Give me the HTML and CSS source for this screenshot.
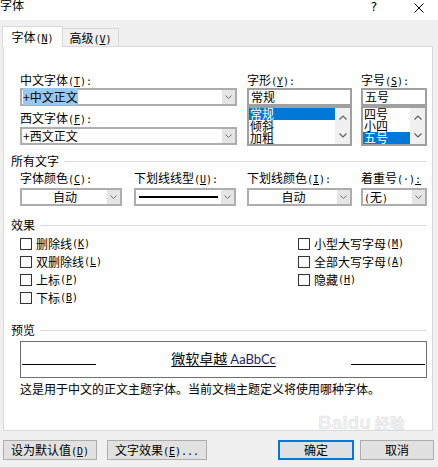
FILE: index.html
```html
<!DOCTYPE html>
<html lang="zh-CN">
<head>
<meta charset="utf-8">
<link rel="stylesheet" href="styles.css">
</head>
<body>
<div class="titlebar">
  <span class="title">字体</span>
  <span class="help">?</span>
  <span class="close"><svg width="10" height="10" viewBox="0 0 10 10"><path d="M0.5 0.5 L9.5 9.5 M9.5 0.5 L0.5 9.5" stroke="#000" stroke-width="1" fill="none"/></svg></span>
</div>

<div class="tabs">
  <div class="tab active">字体<span class="m">(<u>N</u>)</span></div>
  <div class="tab inactive">高级<span class="m">(<u>V</u>)</span></div>
</div>

<div class="panel">
  <div class="fontgrid">
    <div class="col">
      <div class="lbl">中文字体<span class="m">(<u>T</u>):</span></div>
      <div class="combo wide"><div class="val"><span class="seltext">+中文正文</span></div><div class="arr"><svg width="7" height="4" viewBox="0 0 7 4"><path d="M0.5 0.5 L3.5 3.5 L6.5 0.5" stroke="#707070" fill="none"/></svg></div></div>
      <div class="lbl l2">西文字体<span class="m">(<u>F</u>):</span></div>
      <div class="combo wide"><div class="val">+西文正文</div><div class="arr"><svg width="7" height="4" viewBox="0 0 7 4"><path d="M0.5 0.5 L3.5 3.5 L6.5 0.5" stroke="#707070" fill="none"/></svg></div></div>
    </div>
    <div class="col">
      <div class="lbl">字形<span class="m">(<u>Y</u>):</span></div>
      <div class="tbox">常规</div>
      <div class="lbox">
        <div class="items">
          <div class="item on">常规</div>
          <div class="item">倾斜</div>
          <div class="item">加粗</div>
        </div>
        <div class="sb">
          <svg width="8" height="5" viewBox="0 0 8 5"><path d="M0.5 4.5 L4 1 L7.5 4.5" stroke="#606060" stroke-width="1.2" fill="none"/></svg>
          <svg width="8" height="5" viewBox="0 0 8 5"><path d="M0.5 0.5 L4 4 L7.5 0.5" stroke="#606060" stroke-width="1.2" fill="none"/></svg>
        </div>
      </div>
    </div>
    <div class="col">
      <div class="lbl">字号<span class="m">(<u>S</u>):</span></div>
      <div class="tbox">五号</div>
      <div class="lbox">
        <div class="items">
          <div class="item">四号</div>
          <div class="item">小四</div>
          <div class="item on">五号</div>
        </div>
        <div class="sb">
          <svg width="8" height="5" viewBox="0 0 8 5"><path d="M0.5 4.5 L4 1 L7.5 4.5" stroke="#606060" stroke-width="1.2" fill="none"/></svg>
          <svg width="8" height="5" viewBox="0 0 8 5"><path d="M0.5 0.5 L4 4 L7.5 0.5" stroke="#606060" stroke-width="1.2" fill="none"/></svg>
        </div>
      </div>
    </div>
  </div>

  <div class="ghead first"><span>所有文字</span><i></i></div>
  <div class="fields">
    <div class="field">
      <div class="lbl">字体颜色<span class="m">(<u>C</u>):</span></div>
      <div class="combo w102"><div class="val center">自动</div><div class="arr"><svg width="7" height="4" viewBox="0 0 7 4"><path d="M0.5 0.5 L3.5 3.5 L6.5 0.5" stroke="#707070" fill="none"/></svg></div></div>
    </div>
    <div class="field">
      <div class="lbl">下划线线型<span class="m">(<u>U</u>):</span></div>
      <div class="combo w102"><div class="val linev"><div class="uline"></div></div><div class="arr"><svg width="7" height="4" viewBox="0 0 7 4"><path d="M0.5 0.5 L3.5 3.5 L6.5 0.5" stroke="#707070" fill="none"/></svg></div></div>
    </div>
    <div class="field">
      <div class="lbl">下划线颜色<span class="m">(<u>I</u>):</span></div>
      <div class="combo w105"><div class="val center">自动</div><div class="arr"><svg width="7" height="4" viewBox="0 0 7 4"><path d="M0.5 0.5 L3.5 3.5 L6.5 0.5" stroke="#707070" fill="none"/></svg></div></div>
    </div>
    <div class="field">
      <div class="lbl">着重号<span class="m">(·)<u>:</u></span></div>
      <div class="combo w66"><div class="val"><span class="m">(</span>无<span class="m">)</span></div><div class="arr"><svg width="7" height="4" viewBox="0 0 7 4"><path d="M0.5 0.5 L3.5 3.5 L6.5 0.5" stroke="#707070" fill="none"/></svg></div></div>
    </div>
  </div>

  <div class="ghead effects"><span>效果</span><i></i></div>
  <div class="checks">
    <div class="ccol">
      <div class="chk"><span class="box"></span>删除线<span class="m">(<u>K</u>)</span></div>
      <div class="chk"><span class="box"></span>双删除线<span class="m">(<u>L</u>)</span></div>
      <div class="chk"><span class="box"></span>上标<span class="m">(<u>P</u>)</span></div>
      <div class="chk"><span class="box"></span>下标<span class="m">(<u>B</u>)</span></div>
    </div>
    <div class="ccol">
      <div class="chk"><span class="box"></span>小型大写字母<span class="m">(<u>M</u>)</span></div>
      <div class="chk"><span class="box"></span>全部大写字母<span class="m">(<u>A</u>)</span></div>
      <div class="chk"><span class="box"></span>隐藏<span class="m">(<u>H</u>)</span></div>
    </div>
  </div>

  <div class="ghead prev"><span>预览</span><i></i></div>
  <div class="preview">
    <div class="pline"></div>
    <div class="ptext">微软卓越 <span class="latin">AaBbCc</span></div>
    <div class="pline"></div>
  </div>
  <div class="desc">这是用于中文的正文主题字体。当前文档主题定义将使用哪种字体。</div>
</div>

<div class="buttons">
  <div class="btn b1">设为默认值<span class="m">(<u>D</u>)</span></div>
  <div class="btn b2">文字效果<span class="m">(<u>E</u>)...</span></div>
  <div class="btn b3 default">确定</div>
  <div class="btn b4">取消</div>
</div>

<div class="wm"><span class="wm1">Bai</span><span class="wm2">du</span><span class="wm3">经验</span></div>
</body>
</html>
```

FILE: styles.css
```css
body {
  margin: 0;
  width: 438px;
  height: 467px;
  overflow: hidden;
  position: relative;
  background: #f0f0f0;
  color: #000;
  font-family: "Noto Sans CJK SC", "Liberation Sans", sans-serif;
  font-size: 12px;
  line-height: 16px;
}

.m {
  font-family: "DejaVu Sans Mono", "Liberation Mono", monospace;
  font-size: 10px;
}

u {
  text-decoration: underline;
  text-underline-offset: 1px;
}

/* title bar */
.titlebar {
  height: 20px;
  background: #fff;
  display: flex;
  align-items: flex-start;
}
.title {
  line-height: 12px;
  margin-top: -1px;
}
.help {
  margin-left: auto;
  margin-top: 1px;
  width: 10px;
  text-align: center;
  font-family: "DejaVu Sans", sans-serif;
  font-size: 12px;
  line-height: 12px;
}
.close {
  margin-left: 35px;
  margin-right: 14px;
  margin-top: 3px;
  width: 10px;
  height: 10px;
  display: flex;
}

/* tabs */
.tabs {
  display: flex;
  align-items: flex-start;
  margin-top: 6px;
  padding-left: 2px;
  height: 21px;
  margin-bottom: -1px;
  position: relative;
  z-index: 1;
}
.tab {
  box-sizing: border-box;
  border: 1px solid #d9d9d9;
  border-bottom: none;
  text-align: center;
  white-space: nowrap;
}
.tab.active {
  width: 61px;
  height: 21px;
  background: #fff;
  line-height: 20px;
}
.tab.inactive {
  width: 56px;
  height: 18px;
  margin-top: 2px;
  border-left: none;
  background: #f0f0f0;
  line-height: 17px;
}

/* panel */
.panel {
  box-sizing: border-box;
  width: 430px;
  height: 385px;
  margin-left: 3px;
  border: 1px solid #d9d9d9;
  background: #fff;
  padding: 25px 4px 0 7px;
}

.lbl {
  height: 16px;
  line-height: 16px;
  white-space: nowrap;
}
.lbl.l2 {
  height: 21px;
  box-sizing: border-box;
  padding-top: 4px;
}

.fontgrid {
  display: grid;
  grid-template-columns: 227px 114px 66px;
  padding-left: 9px;
}

.combo {
  box-sizing: border-box;
  height: 18px;
  border: 2px solid #adadad;
  background: #fff;
  display: flex;
}
.combo.wide { width: 217px; }
.combo.w102 { width: 102px; }
.combo.w105 { width: 105px; }
.combo.w66 { width: 66px; }
.combo .val {
  flex: 1;
  min-width: 0;
  line-height: 14px;
  padding-left: 1px;
  white-space: nowrap;
}
.combo .val.center {
  text-align: center;
}
.combo .val.linev {
  display: flex;
  align-items: center;
  padding: 0 3px;
}
.uline {
  flex: 1;
  height: 2px;
  background: #000;
}
.seltext {
  background: #99c9ef;
}
.combo .arr {
  width: 13px;
  background: #e5e5e5;
  display: flex;
  align-items: center;
  justify-content: center;
}

.tbox {
  box-sizing: border-box;
  width: 105px;
  height: 18px;
  border: 2px solid #a0a0a0;
  line-height: 14px;
  padding-left: 2px;
}
.fontgrid .col:last-child .tbox,
.fontgrid .col:last-child .lbox {
  width: 66px;
}
.lbox {
  box-sizing: border-box;
  width: 105px;
  height: 40px;
  border: 2px solid #a0a0a0;
  display: flex;
}
.lbox .items {
  flex: 1;
  min-width: 0;
}
.item {
  height: 12px;
  line-height: 12px;
  padding-left: 1px;
  white-space: nowrap;
}
.item.on {
  background: #0078d7;
  color: #fff;
}
.lbox .sb {
  width: 15px;
  background: #f0f0f0;
  display: flex;
  flex-direction: column;
  justify-content: space-around;
  align-items: center;
}
.lbox .sb svg {
  display: block;
}

/* group headers */
.ghead {
  display: flex;
  align-items: center;
  gap: 5px;
  height: 16px;
  line-height: 16px;
  padding-right: 2px;
}
.ghead i {
  flex: 1;
  height: 1px;
  background: #dcdcdc;
}
.ghead.first { margin-top: 7px; }
.ghead.effects { margin-top: 11px; }
.ghead.prev { margin-top: 15px; }

.fields {
  display: grid;
  grid-template-columns: 114px 113px 114px 66px;
  padding-left: 9px;
  margin-top: 1px;
}
.field .combo {
  margin-top: 2px;
}

/* checkboxes */
.checks {
  display: grid;
  grid-template-columns: 278px 1fr;
  padding-left: 9px;
  margin-top: 2px;
}
.chk {
  display: flex;
  align-items: center;
  height: 18px;
  white-space: nowrap;
}
.box {
  box-sizing: border-box;
  width: 12px;
  height: 12px;
  border: 1px solid #333;
  background: #fff;
  margin-right: 4px;
}

/* preview */
.preview {
  box-sizing: border-box;
  width: 407px;
  height: 37px;
  margin: 3px 0 0 9px;
  border: 1px solid #6e6e6e;
  padding: 8px 1px 0 1px;
  display: flex;
  align-items: flex-start;
  justify-content: space-between;
}
.pline {
  width: 74px;
  height: 1px;
  background: #000;
  margin-top: 14px;
}
.ptext {
  font-size: 14px;
  line-height: 16px;
  text-decoration: underline;
  text-underline-offset: 2px;
  white-space: nowrap;
}
.ptext .latin {
  font-family: Lato, "Liberation Sans", sans-serif;
  font-size: 13px;
  color: #1c1c66;
}
.desc {
  margin: 3px 0 0 9px;
  line-height: 16px;
  white-space: nowrap;
}

/* buttons */
.buttons {
  display: flex;
  margin-top: 9px;
  height: 20px;
  padding: 0 4px 0 3px;
}
.btn {
  box-sizing: border-box;
  height: 20px;
  border: 1px solid #adadad;
  background: #e1e1e1;
  line-height: 18px;
  text-align: center;
  white-space: nowrap;
}
.b1 { width: 94px; }
.b2 { width: 100px; margin-left: 10px; }
.b3 { width: 76px; margin-left: auto; }
.b4 { width: 74px; margin-left: 6px; }
.btn.default {
  border: 2px solid #0078d7;
  line-height: 16px;
}

/* watermark overlay */
.wm {
  position: absolute;
  left: 318px;
  top: 413px;
  font-family: "Liberation Sans", sans-serif;
  font-weight: bold;
  font-size: 19px;
  line-height: 20px;
  color: rgba(235, 235, 235, 0.8);
  -webkit-text-stroke: 0.5px rgba(200, 200, 200, 0.45);
  pointer-events: none;
}
.wm3 {
  font-family: "Noto Sans CJK SC", sans-serif;
  font-size: 15px;
  margin-left: 4px;
}
```
